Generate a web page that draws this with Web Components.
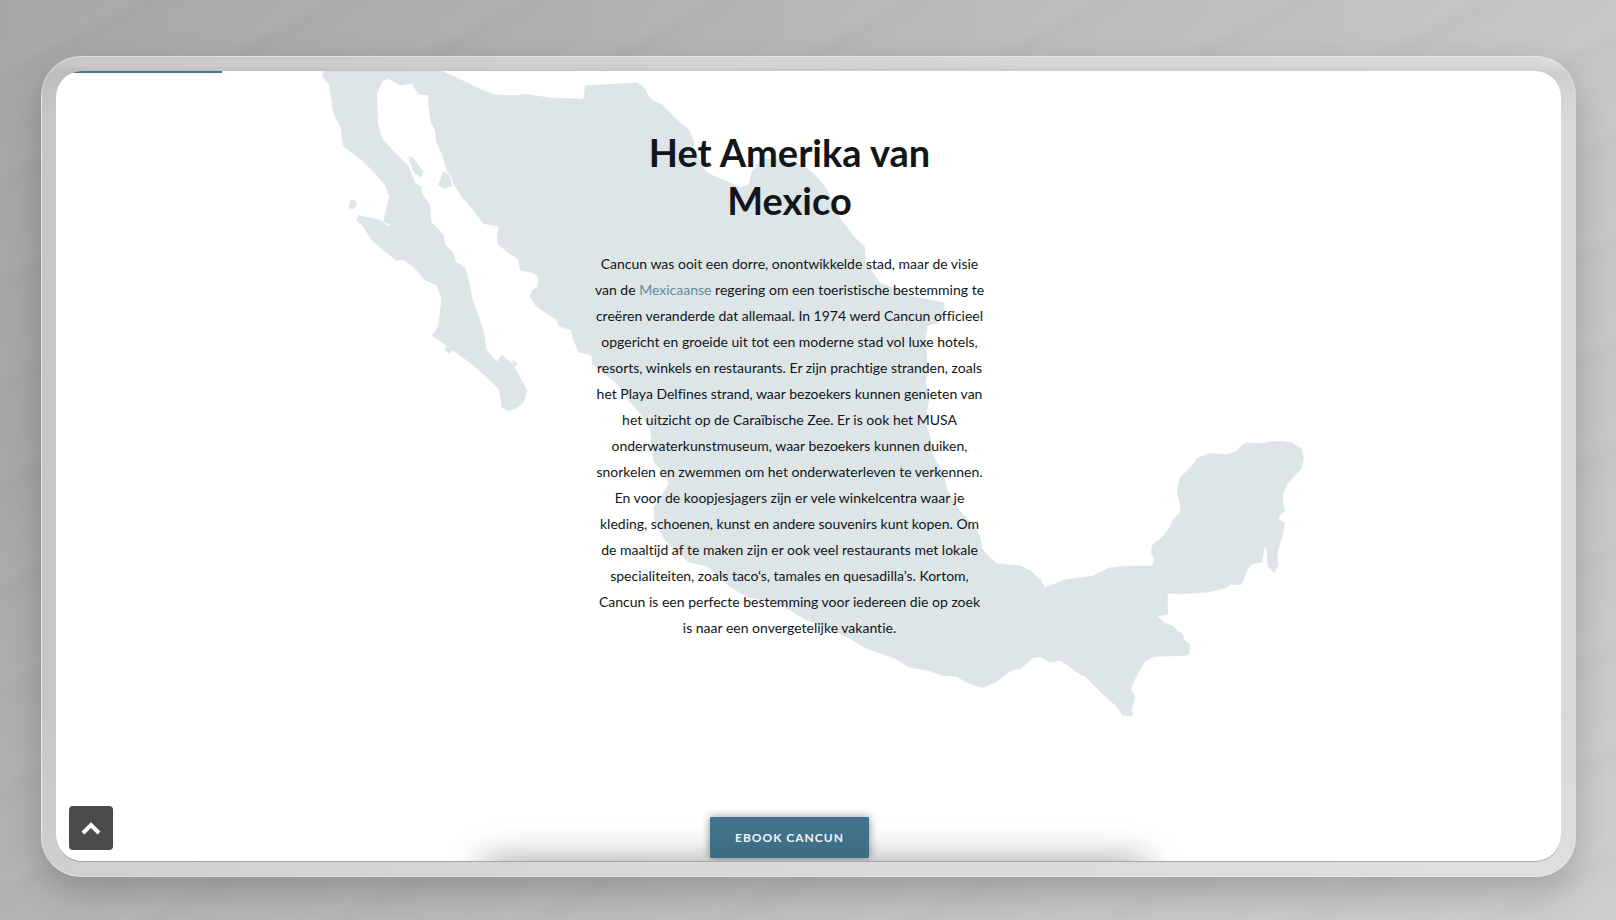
<!DOCTYPE html>
<html lang="nl">
<head>
<meta charset="utf-8">
<title>Het Amerika van Mexico</title>
<style>
  body { margin: 0; font-family: Lato, "Open Sans", sans-serif; color: #10161a; }
</style>
</head>
<body>
<page-stage>
  <glass-frame>
    <mexico-map></mexico-map>
    <read-progress></read-progress>
    <story-section>
      <span slot="title">Het Amerika van Mexico</span>
      Cancun was ooit een dorre, onontwikkelde stad, maar de visie van de <a href="#mexico">Mexicaanse</a> regering om een toeristische bestemming te creëren veranderde dat allemaal. In 1974 werd Cancun officieel opgericht en groeide uit tot een moderne stad vol luxe hotels, resorts, winkels en restaurants. Er zijn prachtige stranden, zoals het Playa Delfines strand, waar bezoekers kunnen genieten van het uitzicht op de Caraïbische Zee. Er is ook het MUSA onderwaterkunstmuseum, waar bezoekers kunnen duiken, snorkelen en zwemmen om het onderwaterleven te verkennen. En voor de koopjesjagers zijn er vele winkelcentra waar je kleding, schoenen, kunst en andere souvenirs kunt kopen. Om de maaltijd af te maken zijn er ook veel restaurants met lokale specialiteiten, zoals taco‘s, tamales en quesadilla’s. Kortom, Cancun is een perfecte bestemming voor iedereen die op zoek is naar een onvergetelijke vakantie.
    </story-section>
    <next-card></next-card>
    <cta-link href="#ebook">EBOOK CANCUN</cta-link>
    <to-top></to-top>
  </glass-frame>
</page-stage>
<script>
const define = (name, html, setup) => {
  const template = document.createElement('template');
  template.innerHTML = html;
  customElements.define(name, class extends HTMLElement {
    constructor() {
      super();
      this.attachShadow({ mode: 'open' }).append(template.content.cloneNode(true));
    }
    connectedCallback() { if (setup) setup(this, this.shadowRoot); }
  });
};

define('page-stage', `
<style>
  :host {
    display: flex; box-sizing: border-box; min-height: 100vh; padding: 56px 40px 43px 41px;
    background:
      linear-gradient(180deg, rgba(255,255,255,0) 50%, rgba(255,255,255,.14)),
      repeating-linear-gradient(152deg, rgba(255,255,255,0) 0 30px, rgba(255,255,255,.02) 60px, rgba(0,0,0,.015) 72px, rgba(255,255,255,0) 90px),
      linear-gradient(90deg, #a7a7a7, #aeaeae 30%, #bcbcbc 65%, #c6c6c6);
    overflow: hidden;
  }
  ::slotted(*) { flex: 1; }
</style><slot></slot>`);

define('glass-frame', `
<style>
  :host {
    display: flex; box-sizing: border-box; padding: 14px 14px 15px; border: 1px solid rgba(255,255,255,.35);
    border-radius: 40px;
    background:
      linear-gradient(180deg, rgba(0,0,0,0) 8px, rgba(0,0,0,.05) 15px, rgba(0,0,0,0) 60px),
      linear-gradient(180deg, rgba(255,255,255,0) 80%, rgba(255,255,255,.15)),
      linear-gradient(90deg, #c7c7c7, #d2d2d2 40%, #d9d9d9);
    box-shadow: 0 15px 35px rgba(0,0,0,.2);
  }
  .screen {
    position: relative; flex: 1; display: flex; flex-direction: column; align-items: center;
    box-sizing: border-box; padding: 57px 38px 3px 0; border-radius: 26px; background: #fff;
    overflow: hidden; box-shadow: 0 1px 0 rgba(0,0,0,.22);
  }
</style><div class="screen"><slot></slot></div>`);

define('read-progress', `
<style>
  :host { position: absolute; inset: 0 0 auto; display: flex; }
  progress { appearance: none; flex: 1; height: 2px; border: 0; background: none; }
  progress::-webkit-progress-bar { background: none; }
  progress::-webkit-progress-value { background: #437489; }
</style><progress value="11" max="100" aria-label="Leesvoortgang"></progress>`);

define('mexico-map', `
<style>
  :host { position: absolute; inset: 0; }
  svg { display: block; width: 100%; height: 100%; }
  path { fill: #dde5e7; stroke: #dde5e7; stroke-width: 2; stroke-linejoin: round; }
</style>
<svg viewBox="-732 63 4512 2367" preserveAspectRatio="xMidYMin meet" aria-hidden="true"><path/></svg>`,
(host, root) => {
  // Each stretch of coast: x origin, y origin, then points relative to that origin.
  const outline = [
    [0, 0, '70,50 400,50 435,68 500,98 545,120 585,135 640,137 680,133 755,145 850,147 855,108 930,103 1010,98 1030,112 1050,148 1085,165 1110,190 1130,210 1165,240 1180,275'],
    [780, 0, '400,300 425,345 440,368 460,378 500,395 540,412 565,405 575,365 600,330 640,325 700,335 750,362 790,405 805,430 835,500 880,560 912,590 915,640 960,700 1000,715 1060,740 1150,758 1150,785 1130,820 1100,825 1095,860 1100,950 1095,1000 1105,1040 1095,1120 1108,1160 1120,1220 1150,1280 1160,1320 1200,1385 1240,1425 1258,1460'],
    [2040, 1110, '5,385 25,410 50,430 95,435 120,437 155,455 180,480 192,502 225,490 255,478 335,468 385,443 440,437 515,437 522,415 512,400 515,375 545,350 565,325 578,298 600,275 597,245 590,215 597,175 635,135 648,115 685,100 740,103 765,95 780,78 795,68 845,70 885,63 930,67 962,85 968,115 962,145 920,190 905,225 906,250 912,270 890,295 912,308 905,345 888,400 892,435 880,457 862,438 858,380 850,382 843,425 815,430 798,450 790,475 780,493 750,492 735,503 680,515 600,520 560,518 560,582 528,586 552,608 578,618 590,633 605,640 610,660 627,672 625,700 610,705 520,708 490,725 465,770 450,805 463,830 453,865 455,885 425,885 410,860 365,820 315,768 300,762 240,720 205,725 180,708 155,712 120,745 95,748 45,785 10,800'],
    [780, 1050, '1260,860 1215,845 1190,828 1145,825 1110,812 1045,800 1000,772 920,745 870,715 820,692 730,655 690,630 640,605 560,590 510,560 470,525 440,497 385,485 350,455 315,420 285,370 280,320 305,285 325,250 310,215 280,185 275,140 270,90 240,40 205,0'],
    [0, 0, '950,1000 875,940 875,915 835,905 820,870 812,838 775,828 770,808 740,790 705,765 690,740 695,722 712,710 715,680 700,668 660,660 655,628 620,605 592,580 590,555 597,530 550,520 515,475 485,440 460,400 452,375 440,360 425,310 410,280 405,240 392,215 385,160 385,135 355,132 335,100 300,105 262,85 247,92 230,130 232,220 245,265 285,310 325,350 345,400 362,410 365,430 388,465 392,515 430,555 435,585 460,610 465,635 495,655 505,690 515,745 535,800 550,845 558,900 590,935 605,915 635,940 655,975 680,1020 670,1055 650,1072 625,1082 605,1072 598,1020 580,1000 520,945 465,905 395,855 415,830 425,745 410,705 375,690 340,650 310,628 290,632 250,600 215,570 190,530 168,510 175,497 240,510 262,530 272,525 250,515 255,490 268,440 255,405 225,370 190,335 130,288 122,230 100,190 95,150 88,105 68,80']
  ];
  const islands = [
    '325,320 340,325 368,365 362,382 340,365',
    '430,365 447,375 455,408 430,415 415,405',
    '152,452 162,450 170,464 160,476 146,474',
    '438,890 458,898 448,910 435,900',
    '638,930 652,942 640,948'
  ];
  const shift = (points, dx, dy) => points.split(' ').map(p => {
    const [x, y] = p.split(',').map(Number);
    return (x + dx) + ',' + (y + dy);
  }).join(' ');
  const land = outline.map(([dx, dy, points]) => shift(points, dx, dy)).join(' ');
  root.querySelector('path').setAttribute('d', [land, ...islands].map(p => 'M' + p + 'Z').join(' '));
});

define('story-section', `
<style>
  :host { position: relative; display: block; width: 100%; max-width: 390px; text-align: center; font-variant-ligatures: none; }
  h2 { margin: 0 auto 27px; max-width: 320px; font-size: 38px; line-height: 48px; font-weight: 700; }
  p { margin: 0; font-size: 14px; line-height: 26px; }
  ::slotted(a) { color: #5f8c9d; text-decoration: none; }
</style><h2><slot name="title"></slot></h2><p><slot></slot></p>`);

define('next-card', `
<style>
  :host { position: absolute; top: 100%; left: 428px; right: 415px; height: 100px; box-shadow: 0 0 36px rgba(0,0,0,.38); }
</style>`);

define('cta-link', `
<style>
  :host { position: relative; display: flex; margin-top: auto; }
  a {
    padding: 0 25px; font-size: 12px; line-height: 41px; font-weight: 700; letter-spacing: 1px; color: #eef6f9;
    text-decoration: none; border-radius: 1px; background: linear-gradient(#437590, #3d6d84);
    box-shadow: 0 0 8px rgba(0,0,0,.45);
  }
</style><a><slot></slot></a>`,
(host, root) => root.querySelector('a').setAttribute('href', host.getAttribute('href')));

define('to-top', `
<style>
  :host { position: absolute; left: 13px; bottom: 11px; display: flex; }
  button { display: grid; place-items: center; width: 44px; height: 44px; padding: 0; border: 0; border-radius: 4px; background: #4b4b4b; cursor: pointer; }
  svg { width: 20px; height: 20px; fill: none; stroke: #fff; stroke-width: 4; }
</style>
<button type="button" aria-label="Naar boven"><svg viewBox="0 0 20 20" aria-hidden="true"><path d="M2 15 10 7l8 8"/></svg></button>`);
</script>
</body>
</html>
